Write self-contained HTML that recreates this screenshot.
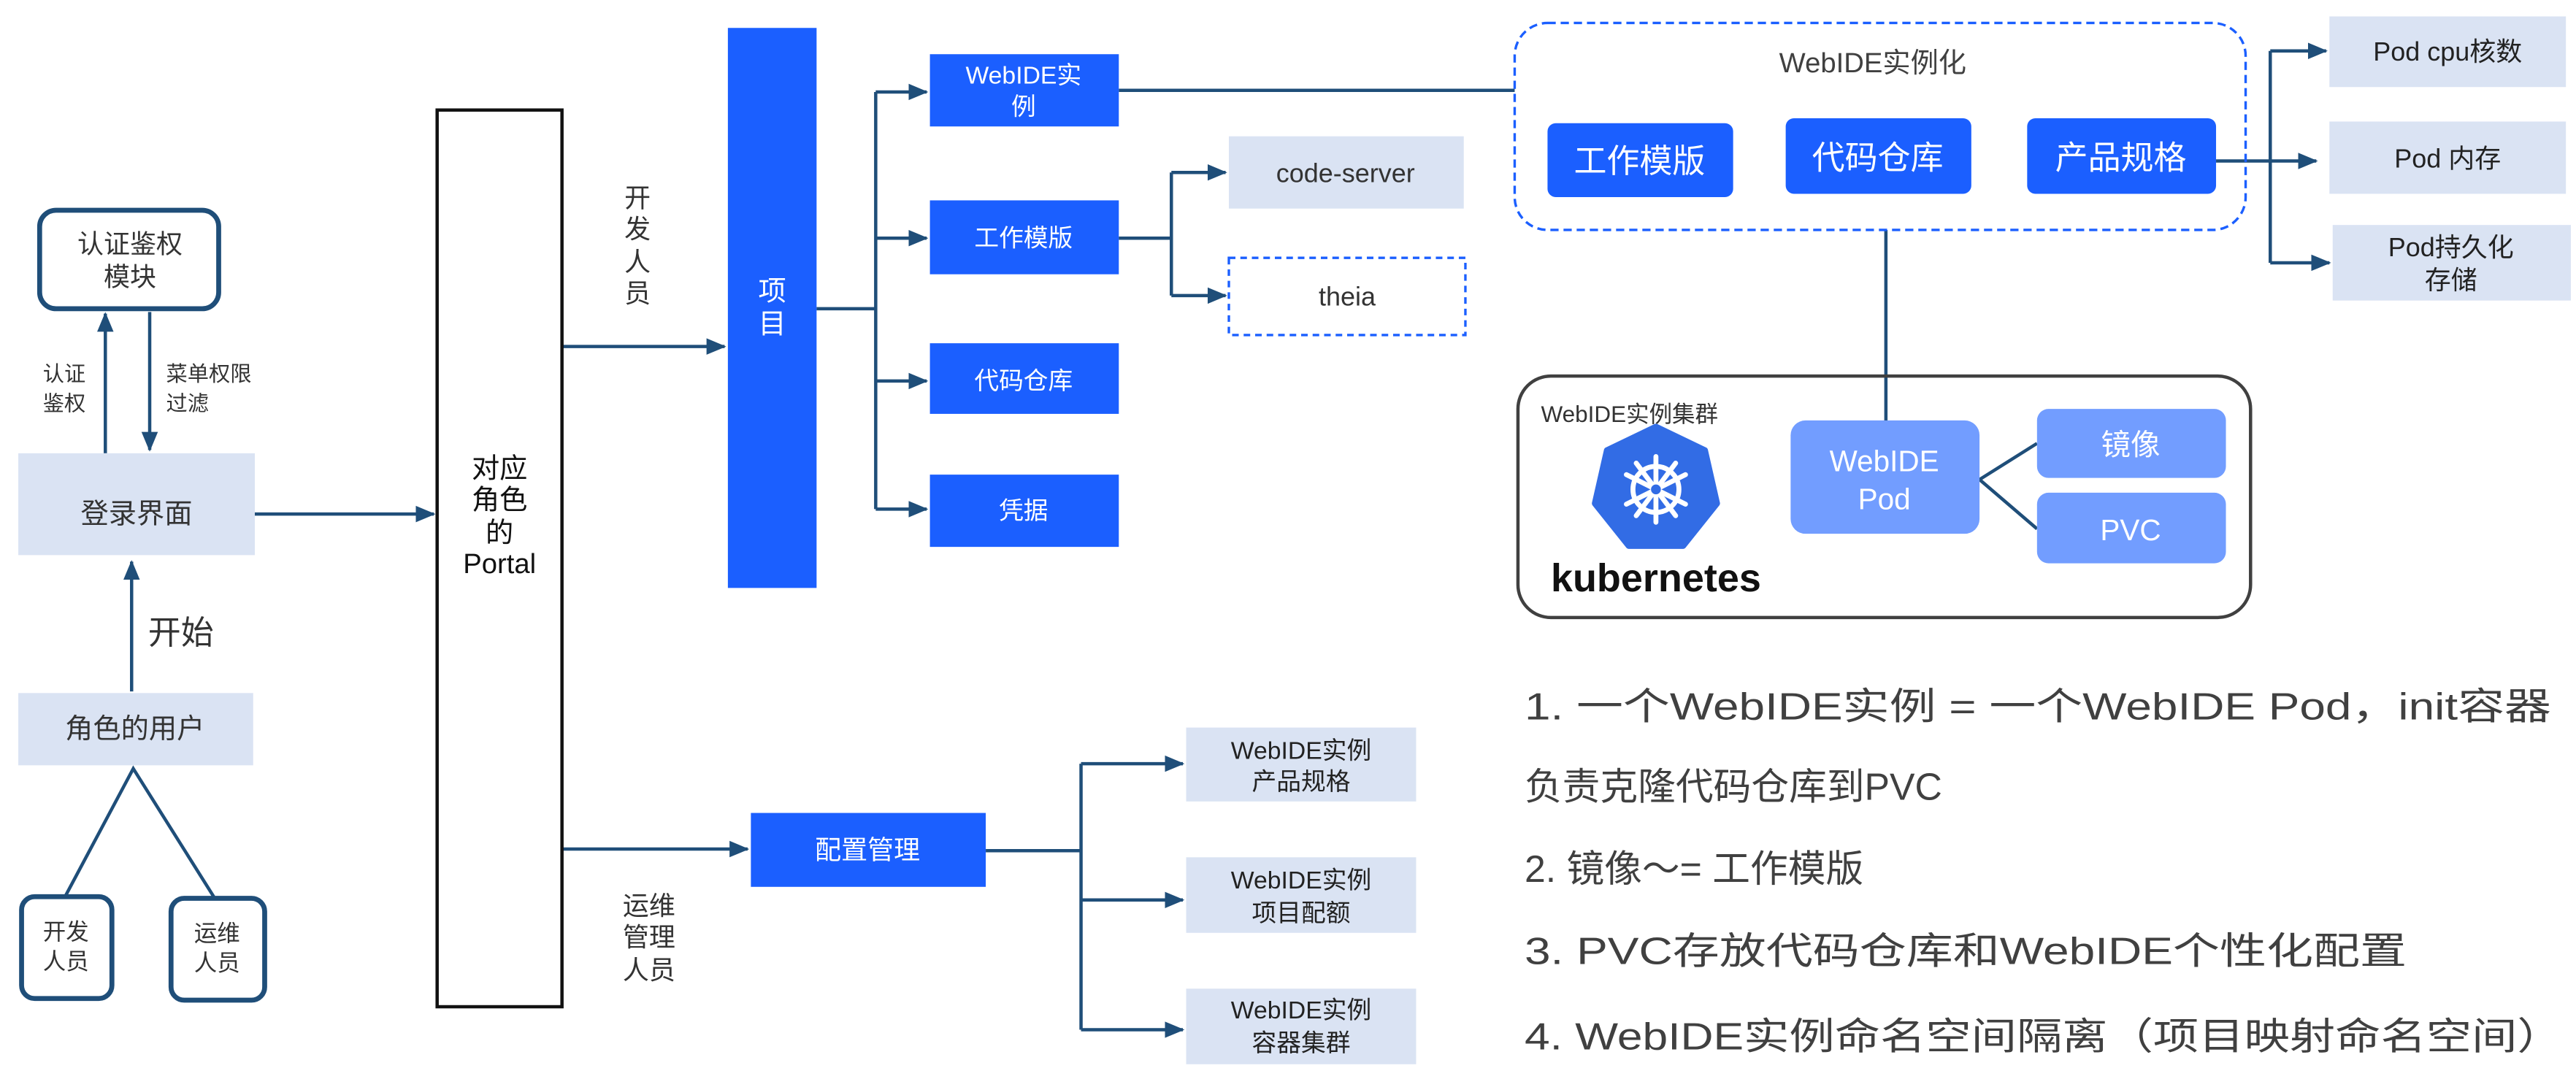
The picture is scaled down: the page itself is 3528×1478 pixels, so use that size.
<!DOCTYPE html>
<html><head><meta charset="utf-8"><style>
html,body{margin:0;padding:0;background:#fff;}
svg{display:block;}
text{font-family:"Liberation Sans","Noto Sans CJK SC",sans-serif;}
</style></head><body>
<svg width="3528" height="1478" viewBox="0 0 1568 657" xmlns="http://www.w3.org/2000/svg">
<defs>
<marker id="a" markerUnits="userSpaceOnUse" markerWidth="12" markerHeight="12" refX="11" refY="6" orient="auto"><path d="M0,1 L12,6 L0,11 Z" fill="#1f4e79"/></marker>
</defs>
<rect width="1568" height="657" fill="#fff"/>
<g stroke="#1f4e79" stroke-width="2" fill="none">
<!-- left -->
<rect x="24" y="128" width="109" height="60" rx="10" stroke-width="3"/>
<line x1="64" y1="276" x2="64" y2="191" marker-end="url(#a)"/>
<line x1="91" y1="190" x2="91" y2="274" marker-end="url(#a)"/>
<line x1="155" y1="313" x2="264" y2="313" marker-end="url(#a)"/>
<line x1="80" y1="421" x2="80" y2="342" marker-end="url(#a)"/>
<polyline points="40,545 81,468 130,546"/>
<rect x="13" y="546" width="55" height="62" rx="8" stroke-width="3"/>
<rect x="104" y="547" width="57" height="62" rx="8" stroke-width="3"/>
<line x1="342" y1="211" x2="441" y2="211" marker-end="url(#a)"/>
<line x1="342" y1="517" x2="455" y2="517" marker-end="url(#a)"/>
<!-- project branch -->
<line x1="497" y1="188" x2="533" y2="188"/>
<line x1="533" y1="56" x2="533" y2="310"/>
<line x1="533" y1="56" x2="564" y2="56" marker-end="url(#a)"/>
<line x1="533" y1="145" x2="564" y2="145" marker-end="url(#a)"/>
<line x1="533" y1="232" x2="564" y2="232" marker-end="url(#a)"/>
<line x1="533" y1="310" x2="564" y2="310" marker-end="url(#a)"/>
<line x1="681" y1="55" x2="922" y2="55"/>
<line x1="681" y1="145" x2="713" y2="145"/>
<line x1="713" y1="105" x2="713" y2="180"/>
<line x1="713" y1="105" x2="746" y2="105" marker-end="url(#a)"/>
<line x1="713" y1="180" x2="746" y2="180" marker-end="url(#a)"/>
<!-- config branch -->
<line x1="600" y1="518" x2="658" y2="518"/>
<line x1="658" y1="465" x2="658" y2="627"/>
<line x1="658" y1="465" x2="720" y2="465" marker-end="url(#a)"/>
<line x1="658" y1="548" x2="720" y2="548" marker-end="url(#a)"/>
<line x1="658" y1="627" x2="720" y2="627" marker-end="url(#a)"/>
<!-- right -->
<line x1="1349" y1="98" x2="1410" y2="98" marker-end="url(#a)"/>
<line x1="1382" y1="31" x2="1382" y2="160"/>
<line x1="1382" y1="31" x2="1416" y2="31" marker-end="url(#a)"/>
<line x1="1382" y1="160" x2="1418" y2="160" marker-end="url(#a)"/>
<line x1="1148" y1="140" x2="1148" y2="258"/>
<polyline points="1240,270 1205,292 1240,322"/>
</g>
<!-- fills -->
<rect x="11" y="276" width="144" height="62" fill="#dae3f3"/>
<rect x="11" y="422" width="143" height="44" fill="#dae3f3"/>
<rect x="266" y="67" width="76" height="546" fill="#fff" stroke="#111" stroke-width="2"/>
<rect x="443" y="17" width="54" height="341" fill="#1b5fff"/>
<rect x="566" y="33" width="115" height="44" fill="#1b5fff"/>
<rect x="566" y="122" width="115" height="45" fill="#1b5fff"/>
<rect x="566" y="209" width="115" height="43" fill="#1b5fff"/>
<rect x="566" y="289" width="115" height="44" fill="#1b5fff"/>
<rect x="748" y="83" width="143" height="44" fill="#dae3f3"/>
<rect x="748" y="157" width="144" height="47" fill="#fff" stroke="#1b5fff" stroke-width="1.5" stroke-dasharray="4,3"/>
<rect x="457" y="495" width="143" height="45" fill="#1b5fff"/>
<rect x="722" y="443" width="140" height="45" fill="#dae3f3"/>
<rect x="722" y="522" width="140" height="46" fill="#dae3f3"/>
<rect x="722" y="602" width="140" height="46" fill="#dae3f3"/>
<rect x="922" y="14" width="445" height="126" rx="20" fill="none" stroke="#1b5fff" stroke-width="1.5" stroke-dasharray="5,3"/>
<rect x="942" y="75" width="113" height="45" rx="5" fill="#1b5fff"/>
<rect x="1087" y="72" width="113" height="46" rx="5" fill="#1b5fff"/>
<rect x="1234" y="72" width="115" height="46" rx="5" fill="#1b5fff"/>
<rect x="1418" y="10" width="144" height="43" fill="#dae3f3"/>
<rect x="1418" y="74" width="144" height="44" fill="#dae3f3"/>
<rect x="1420" y="137" width="145" height="46" fill="#dae3f3"/>
<rect x="924" y="229" width="446" height="147" rx="20" fill="none" stroke="#404040" stroke-width="2"/>
<rect x="1090" y="256" width="115" height="69" rx="9" fill="#729dff"/>
<rect x="1240" y="249" width="115" height="42" rx="7" fill="#729dff"/>
<rect x="1240" y="300" width="115" height="43" rx="7" fill="#729dff"/>
<!-- k8s logo -->
<path d="M1008,260 L1037.7,274.3 L1045,306.5 L1024.5,332.2 L991.5,332.2 L971,306.5 L978.3,274.3 Z" fill="#326ce5" stroke="#326ce5" stroke-width="4" stroke-linejoin="round"/>
<g stroke="#fff" stroke-width="3" fill="none" stroke-linecap="round">
<circle cx="1008" cy="298" r="14"/>
<line x1="1008" y1="278" x2="1008" y2="318"/>
<line x1="990" y1="289" x2="1026" y2="307"/>
<line x1="990" y1="307" x2="1026" y2="289"/>
<line x1="996" y1="282" x2="1020" y2="314"/>
<line x1="1020" y1="282" x2="996" y2="314"/>
</g>
<circle cx="1008" cy="298" r="3" fill="#326ce5"/>
<text x="944" y="360" font-size="24" font-weight="bold" fill="#111" textLength="128" lengthAdjust="spacingAndGlyphs">kubernetes</text>
<!-- texts -->
<g fill="#333" text-anchor="middle">
<text x="79" y="154" font-size="16">认证鉴权</text>
<text x="79" y="174" font-size="16">模块</text>
<text x="83" y="314" font-size="17" dominant-baseline="middle">登录界面</text>
<text x="82" y="445" font-size="17" dominant-baseline="middle">角色的用户</text>
<text x="40" y="572" font-size="14">开发</text><text x="40" y="590" font-size="14">人员</text>
<text x="132" y="573" font-size="14">运维</text><text x="132" y="591" font-size="14">人员</text>
<g font-size="17" fill="#111"><text x="304" y="291">对应</text><text x="304" y="310">角色</text><text x="304" y="330">的</text><text x="304" y="349">Portal</text></g>
<g font-size="16"><text x="388" y="126">开</text><text x="388" y="145">发</text><text x="388" y="165">人</text><text x="388" y="184">员</text></g>
<g font-size="16"><text x="395" y="557">运维</text><text x="395" y="576">管理</text><text x="395" y="596">人员</text></g>
<text x="819" y="111" font-size="16">code-server</text>
<text x="820" y="186" font-size="16">theia</text>
<g font-size="15" fill="#222"><text x="792" y="462">WebIDE实例</text><text x="792" y="481">产品规格</text>
<text x="792" y="541">WebIDE实例</text><text x="792" y="561">项目配额</text>
<text x="792" y="620">WebIDE实例</text><text x="792" y="640">容器集群</text></g>
<text x="1140" y="44" font-size="17" fill="#404040">WebIDE实例化</text>
<g font-size="16" fill="#222"><text x="1490" y="37">Pod cpu核数</text><text x="1490" y="102">Pod 内存</text>
<text x="1492" y="156">Pod持久化</text><text x="1492" y="176">存储</text></g>
</g>
<g fill="#fff" text-anchor="middle">
<text x="470" y="183" font-size="17">项</text><text x="470" y="203" font-size="17">目</text>
<text x="623" y="51" font-size="15">WebIDE实</text><text x="623" y="70" font-size="15">例</text>
<text x="623" y="150" font-size="15">工作模版</text>
<text x="623" y="237" font-size="15">代码仓库</text>
<text x="623" y="316" font-size="15">凭据</text>
<text x="528" y="523" font-size="16">配置管理</text>
<text x="998" y="105" font-size="20">工作模版</text>
<text x="1143" y="103" font-size="20">代码仓库</text>
<text x="1291" y="103" font-size="20">产品规格</text>
<text x="1147" y="287" font-size="18">WebIDE</text><text x="1147" y="310" font-size="18">Pod</text>
<text x="1297" y="277" font-size="18">镜像</text>
<text x="1297" y="329" font-size="18">PVC</text>
</g>
<text x="938" y="257" font-size="14" fill="#333">WebIDE实例集群</text>
<g font-size="23" fill="#404040">
<text x="928" y="438" textLength="625" lengthAdjust="spacingAndGlyphs">1. 一个WebIDE实例 = 一个WebIDE Pod，init容器</text>
<text x="928" y="487">负责克隆代码仓库到PVC</text>
<text x="928" y="537">2. 镜像～= 工作模版</text>
<text x="928" y="587" textLength="537" lengthAdjust="spacingAndGlyphs">3. PVC存放代码仓库和WebIDE个性化配置</text>
<text x="928" y="639" textLength="632" lengthAdjust="spacingAndGlyphs">4. WebIDE实例命名空间隔离（项目映射命名空间）</text>
</g>
<g font-size="13" fill="#333"><text x="26" y="232">认证</text><text x="26" y="250">鉴权</text>
<text x="101" y="232">菜单权限</text><text x="101" y="250">过滤</text></g>
<text x="90" y="392" font-size="20" fill="#333">开始</text>
</svg>
</body></html>
